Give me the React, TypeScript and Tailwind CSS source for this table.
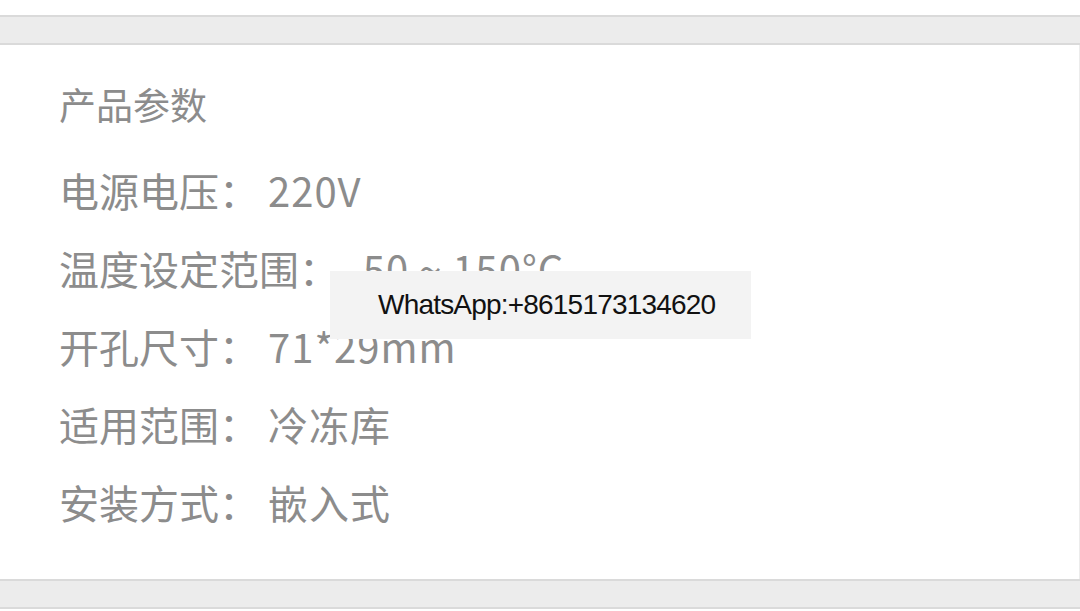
import React from "react";

const specs = [
  { label: "电源电压：", value: "220V" },
  { label: "温度设定范围：", value: "-50 ~ 150°C" },
  { label: "开孔尺寸：", value: "71*29mm" },
  { label: "适用范围：", value: "冷冻库" },
  { label: "安装方式：", value: "嵌入式" },
];

const Band = () => (
  <div className="h-[30px] bg-[#ececec] border-y-2 border-[#dadada]" />
);

const App = () => {
  return (
    <div className="w-[1080px] h-[611px] bg-white overflow-hidden font-['Noto_Sans_CJK_SC','Noto_Sans',sans-serif]">
      <div className="h-[15px] bg-white" />
      <Band />
      <div className="relative h-[534px] pl-[59px] pt-[34px] border-r border-[#ececec]">
        <h2 className="text-[37px] leading-[50px] text-[#8c8c8c] font-normal">
          产品参数
        </h2>
        <ul className="mt-[22px]">
          {specs.map((s) => (
            <li
              key={s.label}
              className="h-[78px] flex items-center text-[40px] text-[#8c8c8c]"
            >
              <span>{s.label}</span>
              <span className="ml-[9px] tracking-[1px]">{s.value}</span>
            </li>
          ))}
        </ul>
        <div className="absolute left-[330px] top-[226px] w-[421px] h-[68px] bg-[#f3f3f3] flex items-center pl-[48px]">
          <span className="text-[28px] tracking-[-0.8px] text-[#111] font-['Liberation_Sans',sans-serif]">
            WhatsApp:+8615173134620
          </span>
        </div>
      </div>
      <Band />
    </div>
  );
};

export default App;
